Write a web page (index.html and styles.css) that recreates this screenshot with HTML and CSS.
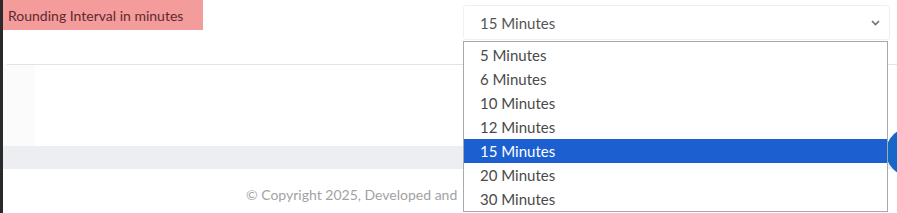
FILE: index.html
```html
<!DOCTYPE html>
<html>
<head>
<meta charset="utf-8">
<link rel="stylesheet" href="styles.css">
</head>
<body>
<div class="page">
  <div class="rail"></div>
  <div class="content">
    <div class="top">
      <div class="label">Rounding Interval in minutes</div>
      <div class="select">
        <span>15 Minutes</span>
        <svg class="chev" width="9" height="6" viewBox="0 0 9 6"><path d="M1 1 L4.5 4.5 L8 1" fill="none" stroke="#6f6f6f" stroke-width="1.6"/></svg>
      </div>
    </div>
    <div class="rule"></div>
    <div class="spacer"></div>
    <div class="band"></div>
    <div class="footer"><span class="copy">© Copyright 2025, Developed and</span></div>
  </div>
  <div class="fab"></div>
  <ul class="menu">
    <li>5 Minutes</li>
    <li>6 Minutes</li>
    <li>10 Minutes</li>
    <li>12 Minutes</li>
    <li class="active">15 Minutes</li>
    <li>20 Minutes</li>
    <li>30 Minutes</li>
  </ul>
</div>
</body>
</html>
```
FILE: styles.css
```css
html, body {
  margin: 0;
  padding: 0;
  background: #ffffff;
  overflow: hidden;
}
.page {
  position: relative;
  width: 897px;
  height: 213px;
  display: flex;
  font-family: Lato, "Open Sans", sans-serif;
  overflow: hidden;
}
.rail {
  width: 3px;
  background: #2a2a2a;
  flex: none;
}
.content {
  flex: 1;
  display: flex;
  flex-direction: column;
  background: linear-gradient(to right, #fbfbfc 0, #fbfbfc 32px, #ffffff 32px);
}
.top {
  height: 64px;
  display: flex;
  justify-content: space-between;
  align-items: flex-start;
  background: #ffffff;
}
.label {
  width: 195px;
  height: 21px;
  padding: 9px 0 0 5px;
  background: #f49b9c;
  color: #5e2a2c;
  font-size: 14px;
  line-height: 1;
  white-space: nowrap;
}
.select {
  margin-top: 5px;
  margin-right: 7px;
  width: 427px;
  height: 35px;
  box-sizing: border-box;
  border: 1px solid #f0f0f0;
  border-radius: 3px;
  display: flex;
  align-items: center;
  justify-content: space-between;
  padding: 0 9px 0 16px;
  font-size: 15px;
  color: #555555;
}
.rule {
  height: 1px;
  margin-left: 4px;
  background: #e3e3e6;
}
.spacer {
  height: 81px;
}
.band {
  height: 23px;
  background: #eceef2;
}
.footer {
  flex: 1;
  padding-left: 243px;
  padding-top: 18px;
  font-size: 14px;
  line-height: 16px;
  color: #a2a2a6;
  background: #ffffff;
  white-space: nowrap;
}
.fab {
  position: absolute;
  left: 886px;
  top: 128px;
  width: 48px;
  height: 48px;
  border-radius: 50%;
  background: #1767c9;
}
.menu {
  position: absolute;
  left: 463px;
  top: 41px;
  width: 425px;
  margin: 0;
  padding: 1px 0 0;
  list-style: none;
  box-sizing: border-box;
  border: 1px solid #a9a9a9;
  background: #ffffff;
}
.menu li {
  height: 24px;
  line-height: 24px;
  padding-left: 16px;
  font-size: 15px;
  color: #4a4a4a;
}
.menu li.active {
  background: #1b5fd1;
  color: #ffffff;
}
```
